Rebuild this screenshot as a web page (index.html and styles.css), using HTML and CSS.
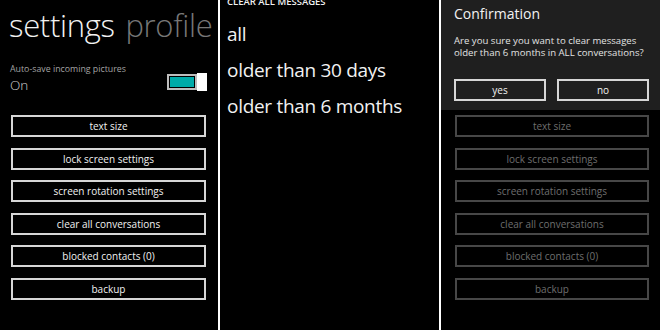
FILE: index.html
```
<!DOCTYPE html>
<html lang="en">

<head>
    <meta charset="UTF-8">
    <meta name="viewport" content="width=device-width, initial-scale=1.0">
    <title>Messaging settings</title>
    <link rel="stylesheet" href="styles.css">
</head>

<body>
    <main class="screens">
        <section class="screen">
            <h1 class="pivot"><span class="pivot-current">settings</span> <span class="pivot-next">profile</span></h1>
            <div class="toggle-row">
                <div>
                    <div class="toggle-label">Auto-save incoming pictures</div>
                    <div class="toggle-value">On</div>
                </div>
                <div class="toggle">
                    <span class="toggle-track"><span class="toggle-fill"></span></span>
                    <span class="toggle-knob"></span>
                </div>
            </div>
            <div class="actions">
                <button>text size</button>
                <button>lock screen settings</button>
                <button>screen rotation settings</button>
                <button>clear all conversations</button>
                <button>blocked contacts (0)</button>
                <button>backup</button>
            </div>
        </section>

        <section class="screen">
            <div class="picker-title">CLEAR ALL MESSAGES</div>
            <ul class="picker-list">
                <li>all</li>
                <li>older than 30 days</li>
                <li>older than 6 months</li>
            </ul>
        </section>

        <section class="screen is-dimmed">
            <div class="dialog">
                <h2 class="dialog-title">Confirmation</h2>
                <p class="dialog-text">Are you sure you want to clear messages older than 6 months in ALL conversations?</p>
                <div class="dialog-buttons">
                    <button>yes</button>
                    <button>no</button>
                </div>
            </div>
            <div class="actions">
                <button>text size</button>
                <button>lock screen settings</button>
                <button>screen rotation settings</button>
                <button>clear all conversations</button>
                <button>blocked contacts (0)</button>
                <button>backup</button>
            </div>
        </section>
    </main>
</body>

</html>
```

FILE: styles.css
```
:root {
    --screen-bg: #000;
    --dialog-bg: #1f1f1f;
    --text: #f2f2f2;
    --text-muted: #a3a3a3;
    --text-faint: #6e6e6e;
    --border: #d6d6d6;
    --border-faint: #474747;
    --accent: #00aba9;
}

* {
    box-sizing: border-box;
}

html {
    font-family: "Open Sans", "Noto Sans", sans-serif;
    color: var(--text);
}

body {
    margin: 0;
    background-color: #fff;
}

.screens {
    display: flex;
    gap: 2px;
    height: 330px;
}

.screen {
    flex: 0 0 219px;
    background-color: var(--screen-bg);
    overflow: hidden;
}

.screen:first-child {
    flex-basis: 218px;
}

/* settings page */

.pivot {
    margin: 0;
    padding: 5px 0 0 9px;
    font-size: 31px;
    font-weight: 300;
    line-height: 40px;
    white-space: nowrap;
    letter-spacing: -0.3px;
}

.pivot-next {
    margin-left: 3px;
    color: #777;
}

.toggle-row {
    display: flex;
    justify-content: space-between;
    align-items: flex-start;
    margin-top: 18px;
    padding: 0 11px 0 10px;
}

.toggle-label {
    font-size: 8.8px;
    line-height: 12px;
    color: var(--text-muted);
}

.toggle-value {
    margin-top: 2px;
    font-size: 13.5px;
    font-weight: 300;
    line-height: 16px;
    color: #d0d0d0;
}

.toggle {
    display: flex;
    align-items: center;
    margin-top: 10px;
}

.toggle-track {
    display: block;
    width: 30px;
    height: 16px;
    padding: 1px;
    border: 2px solid #bdbdbd;
}

.toggle-fill {
    display: block;
    height: 100%;
    background-color: var(--accent);
}

.toggle-knob {
    display: block;
    width: 10px;
    height: 18px;
    background-color: #fff;
}

.actions {
    display: flex;
    flex-direction: column;
    gap: 10.6px;
    margin: 22px 12px 0 11px;
}

.actions button,
.dialog-buttons button {
    height: 22px;
    padding: 0;
    border: 2px solid var(--border);
    background-color: transparent;
    color: var(--text);
    font-family: inherit;
    font-size: 10px;
    font-weight: 400;
}

.is-dimmed .actions {
    margin: 5px 11px 0 14px;
}

.is-dimmed .actions button {
    border-color: var(--border-faint);
    color: var(--text-faint);
}

/* clear messages picker */

.picker-title {
    margin: -4px 0 0 7px;
    font-size: 9.5px;
    font-weight: 600;
    line-height: 12px;
    white-space: nowrap;
}

.picker-list {
    margin: 8px 0 0 0;
    padding: 0 0 0 7px;
    list-style: none;
}

.picker-list li {
    font-size: 19px;
    line-height: 36px;
    letter-spacing: -0.3px;
    white-space: nowrap;
}

/* confirmation dialog */

.dialog {
    height: 110px;
    padding: 4.5px 11px 0 13px;
    background-color: var(--dialog-bg);
}

.dialog-title {
    margin: 0;
    font-size: 14px;
    font-weight: 400;
    line-height: 18px;
}

.dialog-text {
    margin: 12.5px -6px 0 0;
    font-size: 9.6px;
    line-height: 12px;
    color: #e2e2e2;
}

.dialog-buttons {
    display: flex;
    gap: 11px;
    margin-top: 20px;
}

.dialog-buttons button {
    flex: 1;
}
```
